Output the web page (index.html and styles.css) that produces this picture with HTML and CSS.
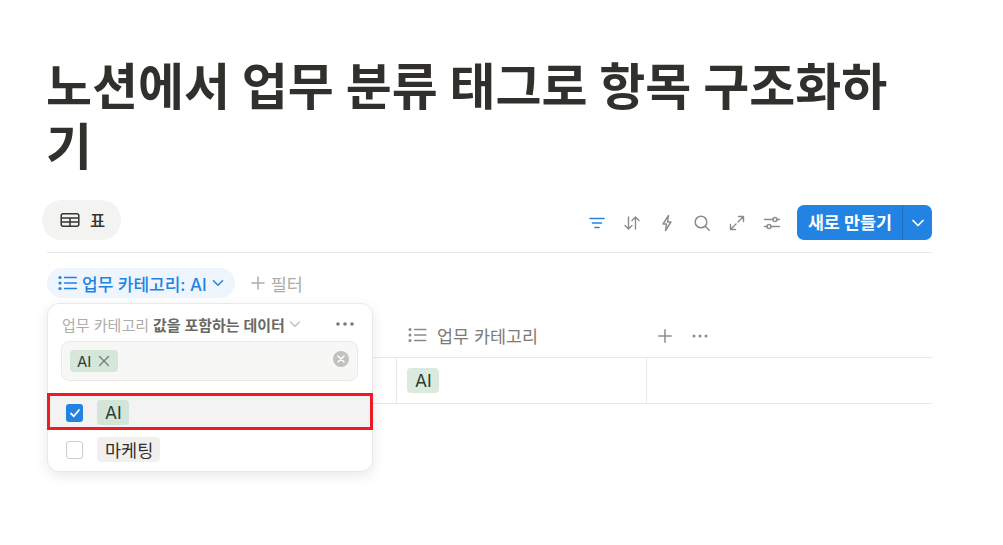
FILE: index.html
```html
<!DOCTYPE html>
<html lang="ko">
<head>
<meta charset="utf-8">
<title>노션에서 업무 분류 태그로 항목 구조화하기</title>
<link rel="stylesheet" href="styles.css">
</head>
<body>
<main class="page">
  <h1 class="title">노션에서 업무 분류 태그로 항목 구조화하기</h1>

  <div class="toolbar">
    <div class="view-tab">
      <svg class="ico-table" width="20" height="16" viewBox="0 0 20 16" fill="none" stroke="#37352f" stroke-width="1.5"><rect x="1.2" y="1.8" width="17.6" height="12.4" rx="2"/><path d="M1.2 6h17.6M1.2 10h17.6M10 6v8"/></svg>
      <span>표</span>
    </div>
    <div class="actions">
      <svg class="act" width="20" height="20" viewBox="0 0 20 20" fill="none" stroke="#2383e2" stroke-width="1.6" stroke-linecap="round"><path d="M3 5.5h14M5.5 10h9M8 14.5h4"/></svg>
      <svg class="act" width="20" height="20" viewBox="0 0 20 20" fill="none" stroke="#8e8b86" stroke-width="1.4" stroke-linecap="round" stroke-linejoin="round"><path d="M6.5 4v12M3 12.5 6.5 16l3.5-3.500M13.500 16V4M10 7.500 13.500 4 17 7.500"/></svg>
      <svg class="act" width="20" height="20" viewBox="0 0 20 20" fill="none" stroke="#8e8b86" stroke-width="1.4" stroke-linejoin="round"><path d="M11.500 2.500 6 11h3.500l-1 6.500L14 9h-3.500z"/></svg>
      <svg class="act" width="20" height="20" viewBox="0 0 20 20" fill="none" stroke="#8e8b86" stroke-width="1.5" stroke-linecap="round"><circle cx="9" cy="9" r="5.800"/><path d="m13.200 13.200 4 4"/></svg>
      <svg class="act" width="20" height="20" viewBox="0 0 20 20" fill="none" stroke="#8e8b86" stroke-width="1.4" stroke-linecap="round" stroke-linejoin="round"><path d="M3.500 16.500 9 11M3.500 11.500v5h5M16.500 3.500 11 9M11.500 3.500h5v5"/></svg>
      <svg class="act" width="20" height="20" viewBox="0 0 20 20" fill="none" stroke="#8e8b86" stroke-width="1.4" stroke-linecap="round"><path d="M2.500 6.500h8.500M15 6.500h2.500M2.500 13.500H5M9 13.500h8.500"/><circle cx="13" cy="6.500" r="2"/><circle cx="7" cy="13.500" r="2"/></svg>
      <div class="new-btn">
        <span class="new-label">새로 만들기</span>
        <span class="new-caret"><svg width="14" height="14" viewBox="0 0 14 14" fill="none" stroke="#fff" stroke-width="1.7" stroke-linecap="round" stroke-linejoin="round"><path d="m2 4.500 5 5 5-5"/></svg></span>
      </div>
    </div>
  </div>

  <div class="filters">
    <div class="chip">
      <svg width="19" height="16" viewBox="0 0 19 16" fill="#2383e2"><circle cx="2" cy="2.500" r="1.600"/><circle cx="2" cy="8" r="1.600"/><circle cx="2" cy="13.500" r="1.600"/><rect x="6" y="1.700" width="13" height="1.600" rx=".5"/><rect x="6" y="7.200" width="13" height="1.600" rx=".5"/><rect x="6" y="12.700" width="13" height="1.600" rx=".5"/></svg>
      <span>업무 카테고리: AI</span>
      <svg width="12" height="12" viewBox="0 0 12 12" fill="none" stroke="#2383e2" stroke-width="1.500" stroke-linecap="round" stroke-linejoin="round"><path d="m1.500 3.800 4.500 4.500 4.500-4.500"/></svg>
    </div>
    <div class="add-filter">
      <svg width="14" height="14" viewBox="0 0 14 14" fill="none" stroke="#aeaca8" stroke-width="1.500" stroke-linecap="round"><path d="M7 1v12M1 7h12"/></svg>
      <span>필터</span>
    </div>
  </div>

  <div class="table">
    <div class="thead">
      <div class="cell-a"></div>
      <div class="cell-b head-label">
        <svg width="19" height="16" viewBox="0 0 19 16" fill="#8e8b86"><circle cx="2" cy="2.500" r="1.500"/><circle cx="2" cy="8" r="1.500"/><circle cx="2" cy="13.500" r="1.500"/><rect x="6" y="1.700" width="12.500" height="1.600" rx=".5"/><rect x="6" y="7.200" width="12.500" height="1.600" rx=".5"/><rect x="6" y="12.700" width="12.500" height="1.600" rx=".5"/></svg>
        <span>업무 카테고리</span>
      </div>
      <div class="cell-c head-tools">
        <svg width="14" height="14" viewBox="0 0 14 14" fill="none" stroke="#8e8b86" stroke-width="1.500" stroke-linecap="round"><path d="M7 .8v12.400M.8 7h12.400"/></svg>
        <svg width="16" height="4" viewBox="0 0 16 4" fill="#8e8b86"><circle cx="2" cy="2" r="1.500"/><circle cx="8" cy="2" r="1.500"/><circle cx="14" cy="2" r="1.500"/></svg>
      </div>
    </div>
    <div class="trow">
      <div class="cell-a"></div>
      <div class="cell-b body-cell"><span class="tag tag-green">AI</span></div>
      <div class="cell-c"></div>
    </div>
  </div>

  <div class="popup">
    <div class="pop-head">
      <div class="pop-title">
        <span class="pop-prop">업무 카테고리</span>
        <strong class="pop-cond">값을 포함하는 데이터</strong>
        <svg width="12" height="12" viewBox="0 0 12 12" fill="none" stroke="#b5b3ae" stroke-width="1.200" stroke-linecap="round" stroke-linejoin="round"><path d="m1.500 3.800 4.500 4.500 4.500-4.500"/></svg>
      </div>
      <svg width="18" height="4" viewBox="0 0 18 4" fill="#7d7a75"><circle cx="2" cy="2" r="1.800"/><circle cx="9" cy="2" r="1.800"/><circle cx="16" cy="2" r="1.800"/></svg>
    </div>
    <div class="pop-input">
      <span class="tag-small">AI
        <svg width="12" height="12" viewBox="0 0 12 12" fill="none" stroke="#6f7d72" stroke-width="1.200" stroke-linecap="round"><path d="m1.500 1.500 9 9M10.500 1.500l-9 9"/></svg>
      </span>
      <span class="clear">
        <svg width="8" height="8" viewBox="0 0 8 8" fill="none" stroke="#fff" stroke-width="1.500" stroke-linecap="round"><path d="m1 1 6 6M7 1 1 7"/></svg>
      </span>
    </div>
    <div class="options">
      <div class="option option-selected">
        <span class="box box-on"><svg width="12" height="12" viewBox="0 0 12 12" fill="none" stroke="#fff" stroke-width="1.800" stroke-linecap="round" stroke-linejoin="round"><path d="m2 6.500 2.800 2.800L10 3"/></svg></span>
        <span class="tag tag-green-strong">AI</span>
      </div>
      <div class="option">
        <span class="box"></span>
        <span class="tag tag-gray">마케팅</span>
      </div>
    </div>
  </div>
</main>
</body>
</html>
```

FILE: styles.css
```css
* { box-sizing: border-box; }

html, body { margin: 0; height: 100%; background: #fff; overflow: hidden; }

body {
  font-family: Inter, "Noto Sans CJK KR", "Noto Sans", sans-serif;
  color: #37352f;
}

.page {
  position: relative;
  width: 885px;
  margin-left: 47px;
  padding-top: 57px;
}

.title {
  margin: 0 0 0 -1px;
  font-size: 50px;
  line-height: 60px;
  font-weight: 700;
  letter-spacing: 0;
  color: #32302c;
}

.toolbar {
  display: flex;
  justify-content: space-between;
  align-items: flex-end;
  height: 53px;
  margin-top: 23px;
  padding-bottom: 12px;
  border-bottom: 1px solid #e9e9e7;
}

.view-tab {
  display: flex;
  align-items: center;
  gap: 10px;
  height: 40px;
  margin-left: -5px;
  padding: 0 16px 0 18px;
  border-radius: 20px;
  background: #f3f3f2;
  font-size: 16.500px;
  font-weight: 500;
}

.actions {
  display: flex;
  align-items: center;
  gap: 15px;
}

.new-btn {
  display: flex;
  align-items: center;
  height: 35px;
  border-radius: 7px;
  background: #2383e2;
  color: #fff;
  font-size: 17.400px;
  font-weight: 700;
}

.new-label {
  padding: 0 10px 0 11px;
  line-height: 35px;
  white-space: nowrap;
}

.new-caret {
  display: flex;
  align-items: center;
  justify-content: center;
  width: 30px;
  height: 35px;
  border-left: 1px solid #1a6fc4;
}

.filters {
  display: flex;
  align-items: center;
  gap: 16px;
  margin-top: 15px;
  height: 30px;
}

.chip {
  display: flex;
  align-items: center;
  gap: 5px;
  height: 30px;
  padding: 0 11px 0 11px;
  border-radius: 15px;
  background: #eef5fd;
  color: #2383e2;
  font-size: 17px;
  font-weight: 500;
  white-space: nowrap;
}

.add-filter {
  display: flex;
  align-items: center;
  gap: 6px;
  color: #aeaca8;
  font-size: 17.500px;
}

.table { margin-top: 17px; }

.thead, .trow {
  display: flex;
  border-bottom: 1px solid #e9e9e7;
}

.thead { height: 43px; }
.trow { height: 46px; }

.cell-a { width: 349px; }
.cell-b { width: 250px; }
.cell-c { flex: 1; }

.trow .cell-b, .trow .cell-c { border-left: 1px solid #e9e9e7; }

.head-label {
  display: flex;
  align-items: center;
  gap: 10px;
  padding: 0 0 2px 12px;
  color: #7d7a75;
  font-size: 17.400px;
}

.head-tools {
  display: flex;
  align-items: center;
  gap: 20px;
  padding-left: 12px;
}

.body-cell {
  display: flex;
  align-items: center;
  padding-left: 10px;
}

.tag {
  display: inline-flex;
  align-items: center;
  height: 25px;
  padding: 0 7px 0 8px;
  border-radius: 4px;
  font-size: 17.500px;
  color: #2b3f33;
}

.tag-green { background: #dbeadf; }
.tag-green-strong { background: #d3e4d8; }
.tag-gray { background: #f1f0ef; color: #32302c; }

.popup {
  position: absolute;
  left: 0;
  top: 303px;
  width: 326px;
  height: 169px;
  padding: 11px 14px 0;
  border: 1px solid #e9e9e7;
  border-radius: 12px;
  background: #fff;
  box-shadow: 0 4px 14px rgba(0, 0, 0, .09);
}

.pop-head {
  display: flex;
  align-items: center;
  justify-content: space-between;
  height: 18px;
  padding-right: 4px;
}

.pop-title {
  display: flex;
  align-items: center;
  gap: 4px;
  font-size: 15px;
  white-space: nowrap;
}

.pop-prop { color: #aeaca8; }
.pop-cond { color: #6b6964; font-weight: 600; }

.pop-input {
  display: flex;
  align-items: center;
  justify-content: space-between;
  width: 297px;
  height: 40px;
  margin: 8px 0 0 -1px;
  padding: 0 8px 0 8px;
  border: 1px solid #e9e9e7;
  border-radius: 8px;
  background: #f7f7f5;
}

.tag-small {
  display: inline-flex;
  align-items: center;
  gap: 7px;
  height: 22px;
  padding: 0 8px 0 7px;
  border-radius: 4px;
  background: #d6e6da;
  color: #2b3f33;
  font-size: 15px;
}

.clear {
  display: flex;
  align-items: center;
  justify-content: center;
  width: 16px;
  height: 16px;
  margin-bottom: 4px;
  border-radius: 50%;
  background: #c3c1bb;
}

.options { margin: 12px 0 0 -15px; }

.option {
  display: flex;
  align-items: center;
  gap: 14px;
  width: 326px;
  height: 37px;
  padding: 2px 0 0 19px;
}

.option-selected {
  background: #f3f3f3;
  outline: 3px solid #ed1c24;
  outline-offset: -3px;
}

.box {
  display: flex;
  align-items: center;
  justify-content: center;
  width: 17px;
  height: 18px;
  border: 1px solid #cfcdc9;
  border-radius: 3px;
  background: #fff;
}

.box-on { border: 0; background: #2383e2; }
```
